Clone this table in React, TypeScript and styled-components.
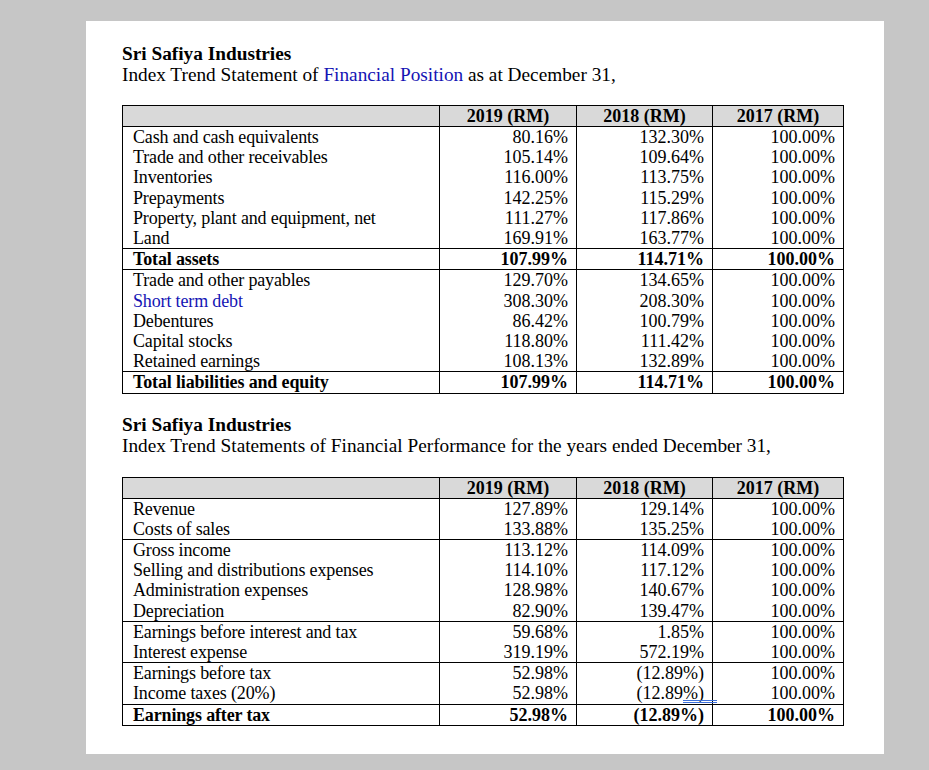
import React from "react";
import styled, { createGlobalStyle } from "styled-components";

const Global = createGlobalStyle`
  html, body { margin: 0; padding: 0; background: #c6c6c6; }
  body { font-family: "Liberation Serif", "Times New Roman", serif; color: #000; }
`;

const Canvas = styled.div`
  width: 929px;
  height: 770px;
  background: #c6c6c6;
  padding: 21px 0 0 86px;
  box-sizing: border-box;
`;

const Page = styled.div`
  width: 798px;
  height: 733px;
  background: #fff;
  box-sizing: border-box;
  padding: 22px 0 0 36px;
  display: flex;
  flex-direction: column;
`;

const Heading = styled.div<{ $gap: number }>`
  font-size: 19.3px;
  line-height: 21px;
  margin-bottom: ${(p) => p.$gap}px;
  white-space: nowrap;
`;

const Company = styled.div`
  font-weight: bold;
`;

const Blue = styled.span`
  color: #1414b4;
`;

const Table = styled.table<{ $gap: number }>`
  border-collapse: collapse;
  width: 721px;
  font-size: 18px;
  margin-bottom: ${(p) => p.$gap}px;
  table-layout: fixed;
`;

const HeadCell = styled.th`
  background: #d9d9d9;
  border: 1px solid #000;
  font-weight: bold;
  text-align: center;
  padding: 0;
  line-height: 20px;
  height: 20px;
  white-space: nowrap;
`;

const Row = styled.tr<{ $sep?: boolean }>`
  border-top: ${(p) => (p.$sep ? "1px solid #000" : "none")};
  vertical-align: baseline;
`;

const LabelCell = styled.td<{ $bold?: boolean; $blue?: boolean }>`
  border-left: 1px solid #000;
  border-right: 1px solid #000;
  padding: 1px 0 0 10px;
  letter-spacing: -0.15px;
  line-height: 19.2px;
  height: 19.2px;
  white-space: nowrap;
  font-weight: ${(p) => (p.$bold ? "bold" : "normal")};
  color: ${(p) => (p.$blue ? "#1414b4" : "#000")};
`;

const NumCell = styled.td<{ $bold?: boolean }>`
  border-left: 1px solid #000;
  border-right: 1px solid #000;
  padding: 1px 8px 0 0;
  line-height: 19.2px;
  height: 19.2px;
  text-align: right;
  white-space: nowrap;
  position: relative;
  font-weight: ${(p) => (p.$bold ? "bold" : "normal")};
`;

const Squiggle = styled.span`
  position: absolute;
  right: -5px;
  bottom: 1px;
  width: 34px;
  height: 1px;
  border-top: 1px solid #3d6fd8;
  border-bottom: 1px solid #3d6fd8;
`;

const Body = styled.tbody`
  & > tr:last-child { border-bottom: 1px solid #000; }
`;

type RowData = {
  label: string;
  v: [string, string, string];
  bold?: boolean;
  blue?: boolean;
  sep?: boolean;
  mark?: boolean;
};

const position: RowData[] = [
  { label: "Cash and cash equivalents", v: ["80.16%", "132.30%", "100.00%"] },
  { label: "Trade and other receivables", v: ["105.14%", "109.64%", "100.00%"] },
  { label: "Inventories", v: ["116.00%", "113.75%", "100.00%"] },
  { label: "Prepayments", v: ["142.25%", "115.29%", "100.00%"] },
  { label: "Property, plant and equipment, net", v: ["111.27%", "117.86%", "100.00%"] },
  { label: "Land", v: ["169.91%", "163.77%", "100.00%"] },
  { label: "Total assets", v: ["107.99%", "114.71%", "100.00%"], bold: true, sep: true },
  { label: "Trade and other payables", v: ["129.70%", "134.65%", "100.00%"], sep: true },
  { label: "Short term debt", v: ["308.30%", "208.30%", "100.00%"], blue: true },
  { label: "Debentures", v: ["86.42%", "100.79%", "100.00%"] },
  { label: "Capital stocks", v: ["118.80%", "111.42%", "100.00%"] },
  { label: "Retained earnings", v: ["108.13%", "132.89%", "100.00%"] },
  { label: "Total liabilities and equity", v: ["107.99%", "114.71%", "100.00%"], bold: true, sep: true },
];

const performance: RowData[] = [
  { label: "Revenue", v: ["127.89%", "129.14%", "100.00%"] },
  { label: "Costs of sales", v: ["133.88%", "135.25%", "100.00%"] },
  { label: "Gross income", v: ["113.12%", "114.09%", "100.00%"], sep: true },
  { label: "Selling and distributions expenses", v: ["114.10%", "117.12%", "100.00%"] },
  { label: "Administration expenses", v: ["128.98%", "140.67%", "100.00%"] },
  { label: "Depreciation", v: ["82.90%", "139.47%", "100.00%"] },
  { label: "Earnings before interest and tax", v: ["59.68%", "1.85%", "100.00%"], sep: true },
  { label: "Interest expense", v: ["319.19%", "572.19%", "100.00%"] },
  { label: "Earnings before tax", v: ["52.98%", "(12.89%)", "100.00%"], sep: true },
  { label: "Income taxes (20%)", v: ["52.98%", "(12.89%)", "100.00%"], mark: true },
  { label: "Earnings after tax", v: ["52.98%", "(12.89%)", "100.00%"], bold: true, sep: true },
];

const Statement: React.FC<{ rows: RowData[]; gap: number }> = ({ rows, gap }) => (
  <Table $gap={gap}>
    <colgroup>
      <col style={{ width: 317 }} />
      <col style={{ width: 137 }} />
      <col style={{ width: 136 }} />
      <col style={{ width: 131 }} />
    </colgroup>
    <thead>
      <tr>
        <HeadCell />
        <HeadCell>2019 (RM)</HeadCell>
        <HeadCell>2018 (RM)</HeadCell>
        <HeadCell>2017 (RM)</HeadCell>
      </tr>
    </thead>
    <Body>
      {rows.map((r) => (
        <Row key={r.label} $sep={r.sep}>
          <LabelCell $bold={r.bold} $blue={r.blue}>{r.label}</LabelCell>
          <NumCell $bold={r.bold}>{r.v[0]}</NumCell>
          <NumCell $bold={r.bold}>
            {r.v[1]}
            {r.mark && <Squiggle />}
          </NumCell>
          <NumCell $bold={r.bold}>{r.v[2]}</NumCell>
        </Row>
      ))}
    </Body>
  </Table>
);

export default function App() {
  return (
    <Canvas>
      <Global />
      <Page>
        <Heading $gap={20}>
          <Company>Sri Safiya Industries</Company>
          <div>
            Index Trend Statement of <Blue>Financial Position</Blue> as at December 31,
          </div>
        </Heading>
        <Statement rows={position} gap={20} />
        <Heading $gap={21}>
          <Company>Sri Safiya Industries</Company>
          <div>Index Trend Statements of Financial Performance for the years ended December 31,</div>
        </Heading>
        <Statement rows={performance} gap={0} />
      </Page>
    </Canvas>
  );
}
